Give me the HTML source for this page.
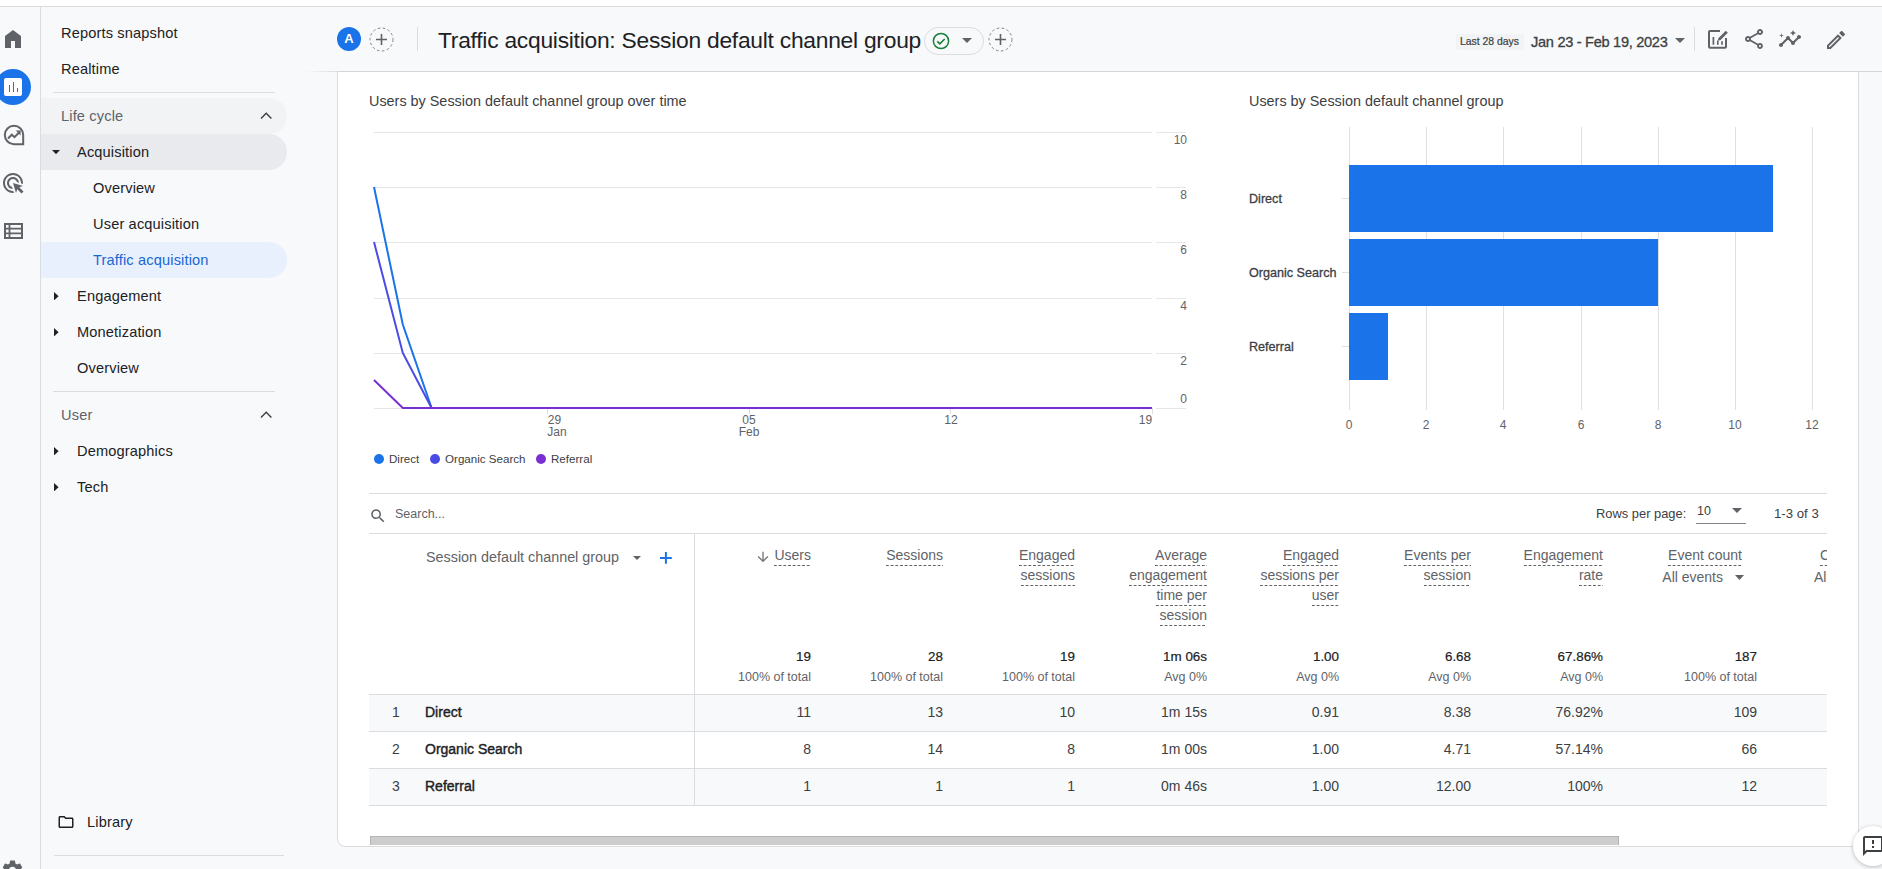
<!DOCTYPE html>
<html><head><meta charset="utf-8">
<style>
*{box-sizing:border-box;margin:0;padding:0}
html,body{width:1882px;height:869px;overflow:hidden;background:#f8f9fa;font-family:"Liberation Sans",sans-serif;color:#202124}
.a{position:absolute;white-space:nowrap}
#topline{position:absolute;left:0;top:0;width:1882px;height:7px;background:#fff;border-bottom:1px solid #dadce0}
#rail{position:absolute;left:0;top:7px;width:41px;height:862px;border-right:1px solid #dadce0;background:#f8f9fa}
.nav{font-size:14.6px;color:#202124;line-height:18px;letter-spacing:0.15px}
.med{-webkit-text-stroke-width:0.4px}
.pill{position:absolute;left:41px;width:246px;height:36px;border-radius:0 18px 18px 0}
.hdr{position:absolute;left:305px;top:7px;width:1577px;height:65px;background:#f8f9fa}
#card{position:absolute;left:337px;top:72px;width:1522px;height:775px;background:#fff;border:1px solid #dadce0;border-top:none;border-radius:0 0 8px 8px}
.gl{position:absolute;height:1px;background:#e6e6e6}
.ax{font-size:12px;color:#5f6368;line-height:14px}
.th{font-size:14px;color:#5f6368;line-height:20px;text-align:right}
.th span{padding-bottom:3px;background:linear-gradient(to right,#5f6368 62%,transparent 0) left bottom/4.7px 1px repeat-x}
.num{font-size:14px;color:#202124;line-height:16px;text-align:right}
.sub{font-size:12.5px;color:#5f6368;line-height:14px;text-align:right}
</style></head><body>
<div id="topline"></div>
<div id="rail">
</div>
<!-- left rail icons -->
<svg class="a" style="left:1px;top:27px" width="24" height="24" viewBox="0 0 24 24"><path d="M4 21V9l8-6 8 6v12h-6v-7h-4v7Z" fill="#5f6368"/></svg>
<div class="a" style="left:-5px;top:69px;width:36px;height:36px;border-radius:50%;background:#1a73e8"></div>
<div class="a" style="left:4px;top:78px;width:18px;height:18px;border-radius:2px;background:#fff"></div>
<div class="a" style="left:8.6px;top:85px;width:1.7px;height:6.7px;background:#1a73e8"></div>
<div class="a" style="left:12.5px;top:82.2px;width:1.7px;height:9.5px;background:#1a73e8"></div>
<div class="a" style="left:16.7px;top:87.9px;width:1.7px;height:3.8px;background:#1a73e8"></div>
<svg class="a" style="left:3px;top:124px" width="22" height="22" viewBox="0 0 22 22"><path d="M20.2 11 A9.2 9.2 0 1 0 11 20.2 H20.2 Z" fill="none" stroke="#5f6368" stroke-width="2"/><path d="M5 14.5 L8.8 10.7 L11.5 13.2 L15.8 8.8" fill="none" stroke="#5f6368" stroke-width="2"/><path d="M12.8 6.6 H17.6 V11.4 Z" fill="#5f6368"/></svg>
<svg class="a" style="left:1.2px;top:171px" width="24" height="24" viewBox="0 0 24 24"><path d="M11.71 17.99C8.53 17.84 6 15.22 6 12c0-3.31 2.69-6 6-6 3.22 0 5.84 2.53 5.99 5.71l-2.1-.63C15.48 9.31 13.89 8 12 8c-2.21 0-4 1.790-4 4 0 1.89 1.31 3.48 3.08 3.890l.63 2.1zM22 12c0 .3-.01.6-.04.9l-1.97-.59c.01-.1.01-.21.01-.31 0-4.42-3.58-8-8-8s-8 3.58-8 8 3.58 8 8 8c.1 0 .21 0 .31-.01l.59 1.97c-.3.03-.6.04-.9.04-5.52 0-10-4.48-10-10S6.48 2 12 2s10 4.48 10 10zm-3.77 4.26L22 15l-10-3 3 10 1.26-3.77 4.27 4.27 1.97-1.97-4.27-4.27z" fill="#5f6368"/></svg>
<svg class="a" style="left:4px;top:223px" width="19" height="16" viewBox="0 0 19 16"><rect x="1" y="1" width="17" height="14" fill="none" stroke="#5f6368" stroke-width="2"/><path d="M1 5.7 H18 M1 10.3 H18 M5.5 1 V15" stroke="#5f6368" stroke-width="1.8"/></svg>

<!-- sidebar nav -->
<div class="a nav" style="left:61px;top:24px">Reports snapshot</div>
<div class="a nav" style="left:61px;top:60px">Realtime</div>
<div class="a" style="left:53px;top:92px;width:222px;height:1px;background:#dadce0"></div>
<div class="pill" style="top:98px;background:#f1f3f4"></div>
<div class="a nav" style="left:61px;top:107px;color:#5f6368">Life cycle</div>
<svg class="a" style="left:260px;top:110px" width="12" height="10" viewBox="0 0 12 10"><path d="M1 8.4 L6.2 3.2 L11.4 8.4" fill="none" stroke="#3c4043" stroke-width="1.4"/></svg>
<div class="pill" style="top:134px;background:#e8eaed"></div>
<svg class="a" style="left:52px;top:150px" width="8" height="4.2" viewBox="0 0 8 4.2"><path d="M0 0 H8 L4 4.2 Z" fill="#202124"/></svg>
<div class="a nav" style="left:77px;top:143px">Acquisition</div>
<div class="a nav" style="left:93px;top:179px">Overview</div>
<div class="a nav" style="left:93px;top:215px">User acquisition</div>
<div class="pill" style="top:242px;background:#e8f0fe"></div>
<div class="a nav" style="left:93px;top:251px;color:#1967d2">Traffic acquisition</div>
<svg class="a" style="left:54px;top:292px" width="4.6" height="8.4" viewBox="0 0 4.6 8.4"><path d="M0 0 V8.4 L4.6 4.2 Z" fill="#202124"/></svg>
<div class="a nav" style="left:77px;top:287px">Engagement</div>
<svg class="a" style="left:54px;top:328px" width="4.6" height="8.4" viewBox="0 0 4.6 8.4"><path d="M0 0 V8.4 L4.6 4.2 Z" fill="#202124"/></svg>
<div class="a nav" style="left:77px;top:323px">Monetization</div>
<div class="a nav" style="left:77px;top:359px">Overview</div>
<div class="a" style="left:53px;top:391px;width:222px;height:1px;background:#dadce0"></div>
<div class="a nav" style="left:61px;top:406px;color:#5f6368">User</div>
<svg class="a" style="left:260px;top:409px" width="12" height="10" viewBox="0 0 12 10"><path d="M1 8.4 L6.2 3.2 L11.4 8.4" fill="none" stroke="#3c4043" stroke-width="1.4"/></svg>
<svg class="a" style="left:54px;top:447px" width="4.6" height="8.4" viewBox="0 0 4.6 8.4"><path d="M0 0 V8.4 L4.6 4.2 Z" fill="#202124"/></svg>
<div class="a nav" style="left:77px;top:442px">Demographics</div>
<svg class="a" style="left:54px;top:483px" width="4.6" height="8.4" viewBox="0 0 4.6 8.4"><path d="M0 0 V8.4 L4.6 4.2 Z" fill="#202124"/></svg>
<div class="a nav" style="left:77px;top:478px">Tech</div>
<svg class="a" style="left:56.8px;top:812.8px" width="18" height="18" viewBox="0 0 24 24"><path d="M9.17 6l2 2H20v10H4V6h5.17M10 4H4c-1.1 0-1.99.9-1.99 2L2 18c0 1.1.9 2 2 2h16c1.1 0 2-.9 2-2V8c0-1.1-.9-2-2-2h-8l-2-2z" fill="#202124"/></svg>
<div class="a nav" style="left:87px;top:813px">Library</div>
<div class="a" style="left:54px;top:855px;width:230px;height:1px;background:#dadce0"></div>
<svg class="a" style="left:0.3px;top:857.5px" width="25" height="25" viewBox="0 0 24 24"><path d="M19.14 12.94c.04-.3.06-.61.06-.94 0-.32-.02-.64-.07-.94l2.03-1.58c.18-.14.23-.41.12-.61l-1.92-3.32c-.12-.22-.37-.29-.59-.22l-2.39.96c-.5-.38-1.03-.7-1.62-.94l-.36-2.54c-.04-.24-.24-.41-.48-.41h-3.84c-.24 0-.43.17-.47.41l-.36 2.54c-.59.24-1.13.57-1.62.94l-2.39-.96c-.22-.08-.47 0-.59.22L2.74 8.87c-.12.21-.08.47.12.61l2.03 1.58c-.05.3-.09.63-.09.94s.02.64.07.94l-2.03 1.58c-.18.14-.23.41-.12.61l1.92 3.32c.12.22.37.29.59.22l2.39-.96c.5.38 1.03.7 1.62.94l.36 2.54c.05.24.24.41.48.41h3.84c.24 0 .44-.17.47-.41l.36-2.54c.59-.24 1.13-.56 1.62-.94l2.39.96c.22.08.47 0 .59-.22l1.92-3.32c.12-.22.07-.47-.12-.61l-2.01-1.58zM12 15.6c-1.98 0-3.6-1.62-3.6-3.6s1.62-3.6 3.6-3.6 3.6 1.62 3.6 3.6-1.62 3.6-3.6 3.6z" fill="#5f6368"/></svg>

<!-- header -->
<div class="hdr"></div>
<div class="a" style="left:305px;top:71px;width:33px;height:1px;background:linear-gradient(to right,rgba(218,220,224,0),#dadce0)"></div><div class="a" style="left:338px;top:71px;width:1544px;height:1px;background:#d3d5d9"></div>

<!-- header content -->
<div class="a" style="left:337px;top:27px;width:24px;height:24px;border-radius:50%;background:#1a73e8;color:#fff;font-size:13px;font-weight:bold;text-align:center;line-height:24px">A</div>
<svg class="a" style="left:369px;top:27px" width="25" height="25" viewBox="0 0 25 25"><circle cx="12.5" cy="12.5" r="11.5" fill="none" stroke="#80868b" stroke-width="1" stroke-dasharray="2.6 2.4"/><path d="M7 12.5 H18 M12.5 7 V18" stroke="#5f6368" stroke-width="1.6"/></svg>
<div class="a" style="left:417px;top:27px;width:1px;height:24px;background:#dadce0"></div>
<div class="a" style="left:438px;top:28px;font-size:22.8px;line-height:24px;color:#202124;letter-spacing:-0.25px">Traffic acquisition: Session default channel group</div>
<div class="a" style="left:924px;top:27px;width:60px;height:28px;border:1px solid #dadce0;border-radius:14px"></div>
<svg class="a" style="left:932px;top:32px" width="18" height="18" viewBox="0 0 18 18"><circle cx="9" cy="9" r="7.6" fill="none" stroke="#188038" stroke-width="1.5"/><path d="M5.3 9.4 L7.8 11.9 L12.7 7" fill="none" stroke="#188038" stroke-width="1.6"/></svg>
<svg class="a" style="left:962px;top:38px" width="10" height="5" viewBox="0 0 10 5"><path d="M0 0 H10 L5 5 Z" fill="#5f6368"/></svg>
<svg class="a" style="left:987.5px;top:26.5px" width="25" height="25" viewBox="0 0 25 25"><circle cx="12.5" cy="12.5" r="11.5" fill="none" stroke="#80868b" stroke-width="1" stroke-dasharray="2.6 2.4"/><path d="M7 12.5 H18 M12.5 7 V18" stroke="#5f6368" stroke-width="1.6"/></svg>

<div class="a" style="left:1456px;top:34px;width:68px;height:16px;background:#f1f3f4;border-radius:2px"></div>
<div class="a" style="left:1460px;top:36px;font-size:10.4px;line-height:12px;color:#3c4043;-webkit-text-stroke-width:0.2px">Last 28 days</div>
<div class="a" style="left:1531px;top:34px;font-size:14.6px;line-height:16px;color:#3c4043;letter-spacing:-0.3px;-webkit-text-stroke-width:0.3px">Jan 23 - Feb 19, 2023</div>
<svg class="a" style="left:1674.5px;top:38px" width="10" height="5" viewBox="0 0 10 5"><path d="M0 0 H10 L5 5 Z" fill="#5f6368"/></svg>
<div class="a" style="left:1694px;top:27px;width:1px;height:24px;background:#dadce0"></div>
<svg class="a" style="left:1706px;top:28px" width="24" height="22" viewBox="0 0 24 22"><path d="M14 3 H4 Q3 3 3 4 V18.7 Q3 19.7 4 19.7 H19 Q20 19.7 20 18.7 V10" fill="none" stroke="#5f6368" stroke-width="2"/><path d="M7.4 9 V16.7 M11.8 12.4 V16.7 M16 13.3 V16.7" stroke="#5f6368" stroke-width="1.7"/><path d="M12.3 10.3 L19.8 2.8 L21.8 4.8 L14.3 12.3 L12 12.6 Z" fill="#5f6368"/></svg>
<svg class="a" style="left:1742px;top:27px" width="24" height="24" viewBox="0 0 24 24"><path d="M18 16.08c-.76 0-1.44.3-1.960.77L8.91 12.7c.05-.23.09-.46.09-.7s-.04-.47-.09-.7l7.05-4.110c.54.5 1.25.81 2.04.81 1.66 0 3-1.34 3-3s-1.34-3-3-3-3 1.34-3 3c0 .24.04.47.09.7L8.04 9.81C7.5 9.31 6.79 9 6 9c-1.66 0-3 1.34-3 3s1.34 3 3 3c.79 0 1.5-.31 2.04-.81l7.12 4.16c-.05.21-.08.43-.08.65 0 1.61 1.31 2.92 2.92 2.92s2.92-1.31 2.92-2.92c0-1.61-1.31-2.92-2.92-2.92zM18 4c.55 0 1 .45 1 1s-.45 1-1 1-1-.45-1-1 .45-1 1-1zM6 13c-.55 0-1-.45-1-1s.45-1 1-1 1 .45 1 1-.45 1-1 1zm12 7.02c-.55 0-1-.45-1-1s.45-1 1-1 1 .45 1 1-.45 1-1 1z" fill="#5f6368"/></svg>
<svg class="a" style="left:1778px;top:27px" width="24" height="24" viewBox="0 0 24 24"><path d="M21 8c-1.45 0-2.26 1.44-1.93 2.51l-3.55 3.56c-.3-.09-.74-.09-1.04 0l-2.55-2.55C12.27 10.45 11.46 9 10 9c-1.45 0-2.27 1.44-1.93 2.52l-4.56 4.55C2.44 15.74 1 16.55 1 18c0 1.1.9 2 2 2 1.45 0 2.26-1.44 1.93-2.51l4.55-4.56c.3.09.74.09 1.04 0l2.55 2.55C12.73 16.55 13.54 18 15 18c1.45 0 2.27-1.44 1.93-2.52l3.56-3.55c1.07.33 2.51-.48 2.51-1.930 0-1.1-.9-2-2-2zM15 9l.94-2.07L18 6l-2.06-.93L15 3l-.92 2.07L12 6l2.08.93zM3.5 11L4 9l2-.5L4 8l-.5-2L3 8l-2 .5L3 9z" fill="#5f6368"/></svg>
<svg class="a" style="left:1824px;top:27.5px" width="24" height="24" viewBox="0 0 24 24"><path d="M3 17.25V21h3.75L17.81 9.94l-3.75-3.75L3 17.25zM5.92 19H5v-.92l9.06-9.06.92.92L5.92 19zM20.71 5.63l-2.34-2.34c-.2-.2-.45-.29-.71-.29s-.51.1-.7.29l-1.83 1.83 3.75 3.75 1.83-1.83c.39-.39.39-1.02 0-1.41z" fill="#5f6368"/></svg>

<!-- card -->
<div id="card"></div>
<div class="a" style="left:369px;top:92px;font-size:14.4px;line-height:18px;color:#3c4043">Users by Session default channel group over time</div>
<div class="a" style="left:1249px;top:92px;font-size:14.4px;line-height:18px;color:#3c4043">Users by Session default channel group</div>
<div class="gl" style="left:374px;top:132px;width:778px"></div><div class="gl" style="left:1156px;top:132px;width:30px"></div>
<div class="a ax" style="left:1147px;top:133px;width:40px;text-align:right">10</div>
<div class="gl" style="left:374px;top:187px;width:778px"></div><div class="gl" style="left:1156px;top:187px;width:30px"></div>
<div class="a ax" style="left:1147px;top:188px;width:40px;text-align:right">8</div>
<div class="gl" style="left:374px;top:242px;width:778px"></div><div class="gl" style="left:1156px;top:242px;width:30px"></div>
<div class="a ax" style="left:1147px;top:243px;width:40px;text-align:right">6</div>
<div class="gl" style="left:374px;top:298px;width:778px"></div><div class="gl" style="left:1156px;top:298px;width:30px"></div>
<div class="a ax" style="left:1147px;top:299px;width:40px;text-align:right">4</div>
<div class="gl" style="left:374px;top:353px;width:778px"></div><div class="gl" style="left:1156px;top:353px;width:30px"></div>
<div class="a ax" style="left:1147px;top:354px;width:40px;text-align:right">2</div>
<div class="gl" style="left:374px;top:408px;width:778px"></div><div class="gl" style="left:1156px;top:408px;width:30px"></div>
<div class="a ax" style="left:1147px;top:392px;width:40px;text-align:right">0</div>
<div class="a ax" style="left:524.5px;top:413px;width:60px;text-align:center">29</div>
<div class="a ax" style="left:527px;top:425px;width:60px;text-align:center">Jan</div>
<div class="a ax" style="left:719px;top:413px;width:60px;text-align:center">05</div>
<div class="a ax" style="left:719px;top:425px;width:60px;text-align:center">Feb</div>
<div class="a ax" style="left:921px;top:413px;width:60px;text-align:center">12</div>
<div class="a ax" style="left:1115.5px;top:413px;width:60px;text-align:center">19</div>
<div class="a" style="left:547px;top:408px;width:1px;height:6px;background:#dadce0"></div><div class="a" style="left:749px;top:408px;width:1px;height:6px;background:#dadce0"></div><div class="a" style="left:950px;top:408px;width:1px;height:6px;background:#dadce0"></div><div class="a" style="left:1152px;top:408px;width:1px;height:6px;background:#dadce0"></div>
<svg class="a" style="left:0;top:0" width="1882" height="869" viewBox="0 0 1882 869">
<polyline points="374,187 402.8,324.5 431.6,408" fill="none" stroke="#1a73e8" stroke-width="2"/>
<polyline points="374,242 402.8,353 431.6,408" fill="none" stroke="#4a4ae6" stroke-width="2"/>
<polyline points="374,380 402.8,408 1152,408" fill="none" stroke="#7a2fd3" stroke-width="2"/>
</svg>
<div class="a" style="left:374px;top:453.5px;width:10px;height:10px;border-radius:50%;background:#1a73e8"></div><div class="a ax" style="left:389px;top:452px;color:#3c4043;font-size:11.6px">Direct</div>
<div class="a" style="left:430px;top:453.5px;width:10px;height:10px;border-radius:50%;background:#4a4ae6"></div><div class="a ax" style="left:445px;top:452px;color:#3c4043;font-size:11.6px">Organic Search</div>
<div class="a" style="left:536px;top:453.5px;width:10px;height:10px;border-radius:50%;background:#7a2fd3"></div><div class="a ax" style="left:551px;top:452px;color:#3c4043;font-size:11.6px">Referral</div>
<div class="a" style="left:1349px;top:127px;width:1px;height:283px;background:#e0e0e0"></div>
<div class="a ax" style="left:1329px;top:418px;width:40px;text-align:center">0</div>
<div class="a" style="left:1426px;top:127px;width:1px;height:283px;background:#e0e0e0"></div>
<div class="a ax" style="left:1406px;top:418px;width:40px;text-align:center">2</div>
<div class="a" style="left:1503px;top:127px;width:1px;height:283px;background:#e0e0e0"></div>
<div class="a ax" style="left:1483px;top:418px;width:40px;text-align:center">4</div>
<div class="a" style="left:1581px;top:127px;width:1px;height:283px;background:#e0e0e0"></div>
<div class="a ax" style="left:1561px;top:418px;width:40px;text-align:center">6</div>
<div class="a" style="left:1658px;top:127px;width:1px;height:283px;background:#e0e0e0"></div>
<div class="a ax" style="left:1638px;top:418px;width:40px;text-align:center">8</div>
<div class="a" style="left:1735px;top:127px;width:1px;height:283px;background:#e0e0e0"></div>
<div class="a ax" style="left:1715px;top:418px;width:40px;text-align:center">10</div>
<div class="a" style="left:1812px;top:127px;width:1px;height:283px;background:#e0e0e0"></div>
<div class="a ax" style="left:1792px;top:418px;width:40px;text-align:center">12</div>
<div class="a" style="left:1349px;top:165px;width:424px;height:67px;background:#1a73e8"></div>
<div class="a ax med" style="left:1249px;top:191.5px;color:#3c4043;-webkit-text-stroke-width:0.3px;font-size:12.6px">Direct</div>
<div class="a" style="left:1342px;top:198px;width:7px;height:1px;background:#e0e0e0"></div>
<div class="a" style="left:1349px;top:239px;width:309px;height:67px;background:#1a73e8"></div>
<div class="a ax med" style="left:1249px;top:265.5px;color:#3c4043;-webkit-text-stroke-width:0.3px;font-size:12.6px">Organic Search</div>
<div class="a" style="left:1342px;top:272px;width:7px;height:1px;background:#e0e0e0"></div>
<div class="a" style="left:1349px;top:313px;width:39px;height:67px;background:#1a73e8"></div>
<div class="a ax med" style="left:1249px;top:339.5px;color:#3c4043;-webkit-text-stroke-width:0.3px;font-size:12.6px">Referral</div>
<div class="a" style="left:1342px;top:346px;width:7px;height:1px;background:#e0e0e0"></div>

<!-- table -->
<div class="a" style="left:369px;top:493px;width:1458px;height:1px;background:#dadce0"></div>
<svg class="a" style="left:369px;top:506.5px" width="18" height="18" viewBox="0 0 24 24"><path d="M15.5 14h-.79l-.28-.27C15.41 12.59 16 11.11 16 9.5 16 5.91 13.09 3 9.5 3S3 5.91 3 9.5 5.91 16 9.5 16c1.61 0 3.09-.59 4.23-1.57l.27.28v.79l5 4.99L20.49 19l-4.99-5zm-6 0C7.010 14 5 11.99 5 9.5S7.01 5 9.5 5 14 7.01 14 9.5 11.99 14 9.5 14z" fill="#5f6368"/></svg>
<div class="a" style="left:395px;top:507px;font-size:12.5px;line-height:14px;color:#5f6368">Search...</div>
<div class="a" style="left:1596px;top:506px;font-size:12.9px;line-height:15px;color:#3c4043">Rows per page:</div>
<div class="a" style="left:1697px;top:504px;font-size:12.5px;line-height:15px;color:#3c4043">10</div>
<svg class="a" style="left:1732px;top:508px" width="10" height="5" viewBox="0 0 10 5"><path d="M0 0 H10 L5 5 Z" fill="#5f6368"/></svg>
<div class="a" style="left:1696px;top:523px;width:50px;height:1px;background:#80868b"></div>
<div class="a" style="left:1774px;top:506px;font-size:13.2px;line-height:15px;color:#3c4043">1-3 of 3</div>
<div class="a" style="left:369px;top:533px;width:1458px;height:1px;background:#dadce0"></div>
<div class="a" style="left:694px;top:534px;width:1px;height:271px;background:#dadce0"></div>
<div class="a" style="left:426px;top:548px;font-size:14.35px;line-height:18px;color:#5f6368">Session default channel group</div>
<svg class="a" style="left:633px;top:556px" width="8" height="4" viewBox="0 0 8 4"><path d="M0 0 H8 L4 4 Z" fill="#5f6368"/></svg>
<svg class="a" style="left:660.3px;top:552px" width="11.8" height="11.8" viewBox="0 0 12 12"><path d="M0 6 H12 M6 0 V12" stroke="#1a73e8" stroke-width="2"/></svg>
<div class="a th" style="left:661px;top:545px;width:150px"><span>Users</span></div>
<div class="a th" style="left:793px;top:545px;width:150px"><span>Sessions</span></div>
<div class="a th" style="left:925px;top:545px;width:150px"><span>Engaged</span></div>
<div class="a th" style="left:925px;top:565px;width:150px"><span>sessions</span></div>
<div class="a th" style="left:1057px;top:545px;width:150px"><span>Average</span></div>
<div class="a th" style="left:1057px;top:565px;width:150px"><span>engagement</span></div>
<div class="a th" style="left:1057px;top:585px;width:150px"><span>time per</span></div>
<div class="a th" style="left:1057px;top:605px;width:150px"><span>session</span></div>
<div class="a th" style="left:1189px;top:545px;width:150px"><span>Engaged</span></div>
<div class="a th" style="left:1189px;top:565px;width:150px"><span>sessions per</span></div>
<div class="a th" style="left:1189px;top:585px;width:150px"><span>user</span></div>
<div class="a th" style="left:1321px;top:545px;width:150px"><span>Events per</span></div>
<div class="a th" style="left:1321px;top:565px;width:150px"><span>session</span></div>
<div class="a th" style="left:1453px;top:545px;width:150px"><span>Engagement</span></div>
<div class="a th" style="left:1453px;top:565px;width:150px"><span>rate</span></div>
<svg class="a" style="left:755.3px;top:549.3px" width="16" height="16" viewBox="0 0 24 24"><path d="M20 12l-1.41-1.41L13 16.17V4h-2v12.17l-5.58-5.59L4 12l8 8 8-8z" fill="#757575"/></svg>
<div class="a th" style="left:1592px;top:545px;width:150px"><span>Event count</span></div>
<div class="a th" style="left:1573px;top:567px;width:150px">All events</div>
<svg class="a" style="left:1735px;top:575px" width="9" height="5" viewBox="0 0 9 5"><path d="M0 0 H9 L4.5 5 Z" fill="#5f6368"/></svg>
<div class="a" style="left:1760px;top:545px;width:67px;height:40px;overflow:hidden"><div class="a th" style="left:60px;top:0"><span>C</span></div><div class="a th" style="left:54px;top:22px">All</div></div>
<div class="a num med" style="left:661px;top:649px;width:150px;font-size:13.4px;-webkit-text-stroke-width:0.2px">19</div>
<div class="a sub" style="left:661px;top:670px;width:150px">100% of total</div>
<div class="a num med" style="left:793px;top:649px;width:150px;font-size:13.4px;-webkit-text-stroke-width:0.2px">28</div>
<div class="a sub" style="left:793px;top:670px;width:150px">100% of total</div>
<div class="a num med" style="left:925px;top:649px;width:150px;font-size:13.4px;-webkit-text-stroke-width:0.2px">19</div>
<div class="a sub" style="left:925px;top:670px;width:150px">100% of total</div>
<div class="a num med" style="left:1057px;top:649px;width:150px;font-size:13.4px;-webkit-text-stroke-width:0.2px">1m 06s</div>
<div class="a sub" style="left:1057px;top:670px;width:150px">Avg 0%</div>
<div class="a num med" style="left:1189px;top:649px;width:150px;font-size:13.4px;-webkit-text-stroke-width:0.2px">1.00</div>
<div class="a sub" style="left:1189px;top:670px;width:150px">Avg 0%</div>
<div class="a num med" style="left:1321px;top:649px;width:150px;font-size:13.4px;-webkit-text-stroke-width:0.2px">6.68</div>
<div class="a sub" style="left:1321px;top:670px;width:150px">Avg 0%</div>
<div class="a num med" style="left:1453px;top:649px;width:150px;font-size:13.4px;-webkit-text-stroke-width:0.2px">67.86%</div>
<div class="a sub" style="left:1453px;top:670px;width:150px">Avg 0%</div>
<div class="a num med" style="left:1607px;top:649px;width:150px;font-size:13.4px;-webkit-text-stroke-width:0.2px">187</div>
<div class="a sub" style="left:1607px;top:670px;width:150px">100% of total</div>
<div class="a" style="left:369px;top:694px;width:1458px;height:1px;background:#dadce0"></div>
<div class="a" style="left:369px;top:695px;width:1458px;height:36px;background:#f8f9fa"></div>
<div class="a" style="left:694px;top:695px;width:1px;height:37px;background:#dadce0"></div>
<div class="a" style="left:369px;top:731px;width:1458px;height:1px;background:#dadce0"></div>
<div class="a num" style="left:376px;top:704px;width:40px;text-align:center;color:#3c4043">1</div>
<div class="a num med" style="left:425px;top:704px;text-align:left">Direct</div>
<div class="a num" style="left:661px;top:704px;width:150px;color:#3c4043">11</div>
<div class="a num" style="left:793px;top:704px;width:150px;color:#3c4043">13</div>
<div class="a num" style="left:925px;top:704px;width:150px;color:#3c4043">10</div>
<div class="a num" style="left:1057px;top:704px;width:150px;color:#3c4043">1m 15s</div>
<div class="a num" style="left:1189px;top:704px;width:150px;color:#3c4043">0.91</div>
<div class="a num" style="left:1321px;top:704px;width:150px;color:#3c4043">8.38</div>
<div class="a num" style="left:1453px;top:704px;width:150px;color:#3c4043">76.92%</div>
<div class="a num" style="left:1607px;top:704px;width:150px;color:#3c4043">109</div>
<div class="a" style="left:369px;top:732px;width:1458px;height:36px;background:#fff"></div>
<div class="a" style="left:694px;top:732px;width:1px;height:37px;background:#dadce0"></div>
<div class="a" style="left:369px;top:768px;width:1458px;height:1px;background:#dadce0"></div>
<div class="a num" style="left:376px;top:741px;width:40px;text-align:center;color:#3c4043">2</div>
<div class="a num med" style="left:425px;top:741px;text-align:left">Organic Search</div>
<div class="a num" style="left:661px;top:741px;width:150px;color:#3c4043">8</div>
<div class="a num" style="left:793px;top:741px;width:150px;color:#3c4043">14</div>
<div class="a num" style="left:925px;top:741px;width:150px;color:#3c4043">8</div>
<div class="a num" style="left:1057px;top:741px;width:150px;color:#3c4043">1m 00s</div>
<div class="a num" style="left:1189px;top:741px;width:150px;color:#3c4043">1.00</div>
<div class="a num" style="left:1321px;top:741px;width:150px;color:#3c4043">4.71</div>
<div class="a num" style="left:1453px;top:741px;width:150px;color:#3c4043">57.14%</div>
<div class="a num" style="left:1607px;top:741px;width:150px;color:#3c4043">66</div>
<div class="a" style="left:369px;top:769px;width:1458px;height:36px;background:#f8f9fa"></div>
<div class="a" style="left:694px;top:769px;width:1px;height:37px;background:#dadce0"></div>
<div class="a" style="left:369px;top:805px;width:1458px;height:1px;background:#dadce0"></div>
<div class="a num" style="left:376px;top:778px;width:40px;text-align:center;color:#3c4043">3</div>
<div class="a num med" style="left:425px;top:778px;text-align:left">Referral</div>
<div class="a num" style="left:661px;top:778px;width:150px;color:#3c4043">1</div>
<div class="a num" style="left:793px;top:778px;width:150px;color:#3c4043">1</div>
<div class="a num" style="left:925px;top:778px;width:150px;color:#3c4043">1</div>
<div class="a num" style="left:1057px;top:778px;width:150px;color:#3c4043">0m 46s</div>
<div class="a num" style="left:1189px;top:778px;width:150px;color:#3c4043">1.00</div>
<div class="a num" style="left:1321px;top:778px;width:150px;color:#3c4043">12.00</div>
<div class="a num" style="left:1453px;top:778px;width:150px;color:#3c4043">100%</div>
<div class="a num" style="left:1607px;top:778px;width:150px;color:#3c4043">12</div>
<div class="a" style="left:370px;top:836px;width:1249px;height:9px;background:#cdcdcd;border:1px solid #b3b3b3;border-bottom:none"></div>
<div class="a" style="left:1853px;top:826px;width:40px;height:40px;border-radius:50%;background:#fff;box-shadow:0 1px 4px rgba(0,0,0,.25)"></div>
<svg class="a" style="left:1861px;top:834px" width="24" height="24" viewBox="0 0 24 24"><path d="M20 2H4c-1.1 0-1.99.9-1.99 2L2 22l4-4h14c1.1 0 2-.9 2-2V4c0-1.1-.9-2-2-2zm0 14H5.17L4 17.17V4h16v12zM11 12h2v2h-2zm0-6h2v4h-2z" fill="#3c4043"/></svg>
</body></html>
